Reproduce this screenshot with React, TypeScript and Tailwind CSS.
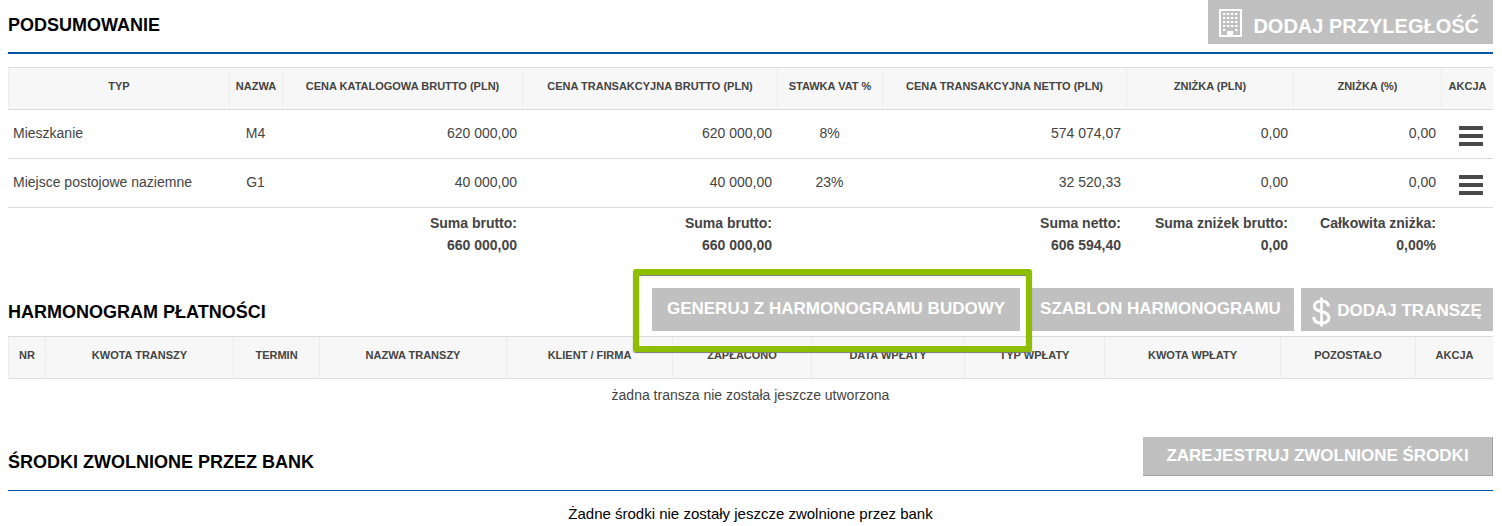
import React from "react";

type Align = "left" | "center" | "right";

const alignClass: Record<Align, string> = {
  left: "text-left",
  center: "text-center",
  right: "text-right",
};

interface Column {
  label: string;
  width: string;
  align?: Align;
}

const summaryColumns: Column[] = [
  { label: "TYP", width: "", align: "left" },
  { label: "NAZWA", width: "w-[53px]", align: "center" },
  { label: "CENA KATALOGOWA BRUTTO (PLN)", width: "w-[240px]", align: "right" },
  { label: "CENA TRANSAKCYJNA BRUTTO (PLN)", width: "w-[255px]", align: "right" },
  { label: "STAWKA VAT %", width: "w-[105px]", align: "center" },
  { label: "CENA TRANSAKCYJNA NETTO (PLN)", width: "w-[244px]", align: "right" },
  { label: "ZNIŻKA (PLN)", width: "w-[167px]", align: "right" },
  { label: "ZNIŻKA (%)", width: "w-[148px]", align: "right" },
  { label: "AKCJA", width: "w-[52px]", align: "center" },
];

const summaryRows: string[][] = [
  ["Mieszkanie", "M4", "620 000,00", "620 000,00", "8%", "574 074,07", "0,00", "0,00"],
  ["Miejsce postojowe naziemne", "G1", "40 000,00", "40 000,00", "23%", "32 520,33", "0,00", "0,00"],
];

const summaryTotals: ([string, string] | null)[] = [
  null,
  null,
  ["Suma brutto:", "660 000,00"],
  ["Suma brutto:", "660 000,00"],
  null,
  ["Suma netto:", "606 594,40"],
  ["Suma zniżek brutto:", "0,00"],
  ["Całkowita zniżka:", "0,00%"],
  null,
];

const scheduleColumns: Column[] = [
  { label: "NR", width: "w-[37px]" },
  { label: "KWOTA TRANSZY", width: "w-[188px]" },
  { label: "TERMIN", width: "w-[86px]" },
  { label: "NAZWA TRANSZY", width: "" },
  { label: "KLIENT / FIRMA", width: "w-[166px]" },
  { label: "ZAPŁACONO", width: "w-[139px]" },
  { label: "DATA WPŁATY", width: "w-[153px]" },
  { label: "TYP WPŁATY", width: "w-[140px]" },
  { label: "KWOTA WPŁATY", width: "w-[176px]" },
  { label: "POZOSTAŁO", width: "w-[135px]" },
  { label: "AKCJA", width: "w-[78px]" },
];

function BuildingIcon() {
  const rows = [4, 8, 12, 16, 20];
  const cols = [4, 8, 12, 16];
  return (
    <svg width="23" height="28" viewBox="0 0 23 28" aria-hidden="true" className="shrink-0">
      <rect x="1" y="1" width="21" height="26" fill="none" stroke="#fff" strokeWidth="2" />
      {rows.map((y) =>
        cols.map((x) =>
          y === 20 && (x === 8 || x === 12) ? null : (
            <rect key={`${x}-${y}`} x={x} y={y} width="2.4" height="2" fill="#fff" />
          ),
        ),
      )}
      <rect x="8" y="22" width="6" height="5" fill="#fff" />
    </svg>
  );
}

function DollarIcon() {
  return (
    <svg width="19" height="30" viewBox="0 0 19 30" fill="none" stroke="#fff" aria-hidden="true" className="shrink-0">
      <path d="M9.5 0.5V29.5" strokeWidth="2.6" />
      <path
        d="M16.6 9.4C16.2 5.9 13.4 4 9.6 4C5.3 4 2.3 6 2.3 9.1C2.3 12.7 5.6 13.6 9.5 14.5C13.9 15.6 17 16.9 17 20.6C17 24.1 14 26.2 9.6 26.2C5 26.2 2 24 1.6 20"
        strokeWidth="3"
      />
    </svg>
  );
}

function MenuIcon() {
  return (
    <svg width="24" height="20" viewBox="0 0 24 20" fill="#4a4a4d" aria-hidden="true">
      <rect width="24" height="4" rx="0.5" />
      <rect y="8" width="24" height="4" rx="0.5" />
      <rect y="16" width="24" height="4" rx="0.5" />
    </svg>
  );
}

function TableHead({ columns }: { columns: Column[] }) {
  return (
    <>
      <colgroup>
        {columns.map((c) => (
          <col key={c.label} className={c.width} />
        ))}
      </colgroup>
      <thead>
        <tr>
          {columns.map((c) => (
            <th
              key={c.label}
              scope="col"
              className="h-[43px] whitespace-nowrap border-y border-l border-y-[#dcdcdc] border-l-[#ececec] bg-[#f7f7f7] pt-2 text-center align-top text-[11px] leading-5 font-bold text-[#444]"
            >
              {c.label}
            </th>
          ))}
        </tr>
      </thead>
    </>
  );
}

function ActionButton({ className, children }: { className: string; children: React.ReactNode }) {
  return (
    <button
      type="button"
      className={`flex cursor-pointer items-center justify-center bg-[#c0c0c0] font-bold whitespace-nowrap text-white ${className}`}
    >
      {children}
    </button>
  );
}

export default function App() {
  return (
    <main className="bg-white pr-[9px] pl-2 font-['Liberation_Sans',Arial,sans-serif] text-sm text-[#444]">
      <section>
        <header className="flex items-start justify-between border-b-2 border-[#0054a6] pb-2">
          <h2 className="pt-[13px] text-lg leading-6 font-bold text-black">PODSUMOWANIE</h2>
          <ActionButton className="h-11 gap-[11px] pt-1 pr-3.5 pl-[11px] text-xl">
            <span className="pb-0.5">
              <BuildingIcon />
            </span>
            <span className="pt-1">DODAJ PRZYLEGŁOŚĆ</span>
          </ActionButton>
        </header>

        <table className="mt-[13px] w-full table-fixed border-separate border-spacing-0">
          <TableHead columns={summaryColumns} />
          <tbody>
            {summaryRows.map((row) => (
              <tr key={row[0]}>
                {row.map((cell, i) => (
                  <td
                    key={i}
                    className={`h-[49px] border-b border-[#dcdcdc] px-[5px] pt-3 align-top leading-[22px] ${alignClass[summaryColumns[i].align ?? "center"]}`}
                  >
                    {cell}
                  </td>
                ))}
                <td className="h-[49px] border-b border-[#dcdcdc] pl-[7px] text-center align-middle">
                  <button type="button" aria-label={`Akcje: ${row[0]}`} className="mx-auto mt-[3px] block cursor-pointer">
                    <MenuIcon />
                  </button>
                </td>
              </tr>
            ))}
          </tbody>
          <tfoot>
            <tr>
              {summaryTotals.map((total, i) => (
                <td key={i} className="px-[5px] pt-1 text-right leading-[22px] font-bold whitespace-nowrap">
                  {total && (
                    <>
                      {total[0]}
                      <br />
                      {total[1]}
                    </>
                  )}
                </td>
              ))}
            </tr>
          </tfoot>
        </table>
      </section>

      <section className="mt-8">
        <header className="flex items-center justify-between">
          <h2 className="pt-1 text-lg leading-6 font-bold text-black">HARMONOGRAM PŁATNOŚCI</h2>
          <div className="flex gap-[7px]">
            <div className="relative">
              <ActionButton className="h-[43px] min-w-[368px] px-2 text-[17px]">GENERUJ Z HARMONOGRAMU BUDOWY</ActionButton>
              <div className="pointer-events-none absolute -top-[19px] -right-3 -bottom-[21px] -left-[19px] z-10 rounded-[3px] border-6 border-[#8dbf00] shadow-[0_1px_1px_#777,inset_0_1px_1px_#777]" />
            </div>
            <ActionButton className="h-[43px] min-w-[267px] px-2 text-[17px]">SZABLON HARMONOGRAMU</ActionButton>
            <ActionButton className="h-[43px] min-w-[192px] gap-1.5 px-2 pt-1 text-[17px]">
              <DollarIcon />
              DODAJ TRANSZĘ
            </ActionButton>
          </div>
        </header>

        <table className="mt-[5px] w-full table-fixed border-separate border-spacing-0">
          <TableHead columns={scheduleColumns} />
          <tbody>
            <tr>
              <td colSpan={scheduleColumns.length} className="pt-[5px] text-center leading-[22px]">
                żadna transza nie została jeszcze utworzona
              </td>
            </tr>
          </tbody>
        </table>
      </section>

      <section className="mt-[31px]">
        <header className="flex items-center justify-between border-b border-[#0054a6] pb-3.5">
          <h2 className="pt-2.5 text-lg leading-6 font-bold text-black">ŚRODKI ZWOLNIONE PRZEZ BANK</h2>
          <ActionButton className="h-[39px] min-w-[350px] border-r border-b border-[#a0a0a0] px-2 text-[17px]">
            ZAREJESTRUJ ZWOLNIONE ŚRODKI
          </ActionButton>
        </header>
        <p className="pt-3 text-center text-[15px] leading-[22px] text-black">
          Żadne środki nie zostały jeszcze zwolnione przez bank
        </p>
      </section>
    </main>
  );
}
